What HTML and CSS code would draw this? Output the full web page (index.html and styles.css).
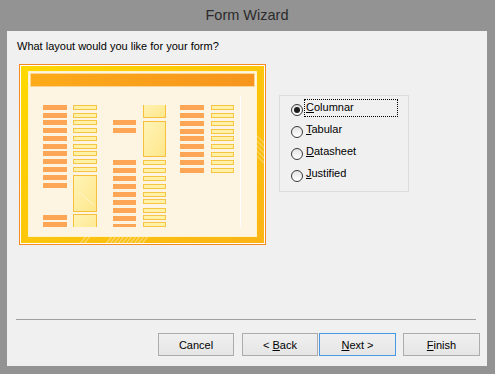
FILE: index.html
```html
<!DOCTYPE html>
<html>
<head>
<meta charset="utf-8">
<link rel="stylesheet" href="styles.css">
</head>
<body>
<div class="window">
  <div class="titlebar">Form Wizard</div>
  <div class="panel">
    <p class="question">What layout would you like for your form?</p>
    <div class="main">
      <svg class="preview" width="247" height="181" viewBox="0 0 247 181">
        <defs>
          <linearGradient id="frame" x1="0" y1="0" x2="1" y2="1">
            <stop offset="0" stop-color="#ffd900"/>
            <stop offset="1" stop-color="#fbb416"/>
          </linearGradient>
          <linearGradient id="hdr" x1="0" y1="0" x2="1" y2="0">
            <stop offset="0" stop-color="#fcab19"/>
            <stop offset="1" stop-color="#f7951e"/>
          </linearGradient>
          <linearGradient id="box" x1="0" y1="0" x2="1" y2="1">
            <stop offset="0" stop-color="#fff4b8"/>
            <stop offset="1" stop-color="#fee68a"/>
          </linearGradient>
          <clipPath id="clip"><rect x="10" y="41" width="227" height="122"/></clipPath>
          <clipPath id="bandb"><rect x="2" y="172" width="243" height="7"/></clipPath>
          <clipPath id="bandr"><rect x="237" y="8" width="8" height="164"/></clipPath>
          <g id="f24"><rect width="24" height="5" fill="#f8c445"/><rect x="1" y="1" width="22" height="3" fill="#fff2a6"/></g>
          <g id="f23"><rect width="23" height="5" fill="#f8c445"/><rect x="1" y="1" width="21" height="3" fill="#fff2a6"/></g>
          <rect id="o24" width="24" height="5" fill="#fda655"/>
          <rect id="o23" width="23" height="5" fill="#fda655"/>
        </defs>
        <rect x="0.5" y="0.5" width="246" height="180" fill="#fff" stroke="#f68a1e"/>
        <rect x="2" y="2" width="243" height="177" fill="url(#frame)"/>
        <g clip-path="url(#bandb)" stroke="#fff" stroke-opacity="0.35" stroke-width="1.5">
          <line x1="86" y1="181" x2="94" y2="171"/><line x1="90" y1="181" x2="98" y2="171"/>
          <line x1="94" y1="181" x2="102" y2="171"/><line x1="98" y1="181" x2="106" y2="171"/>
          <line x1="102" y1="181" x2="110" y2="171"/><line x1="106" y1="181" x2="114" y2="171"/>
          <line x1="110" y1="181" x2="118" y2="171"/><line x1="114" y1="181" x2="122" y2="171"/>
          <line x1="118" y1="181" x2="126" y2="171"/><line x1="122" y1="181" x2="130" y2="171"/>
          <line x1="60" y1="181" x2="68" y2="171"/><line x1="64" y1="181" x2="72" y2="171"/>
        </g>
        <g clip-path="url(#bandr)" stroke="#fff" stroke-opacity="0.3" stroke-width="1.5">
          <line x1="236" y1="70" x2="246" y2="80"/><line x1="236" y1="75" x2="246" y2="85"/>
          <line x1="236" y1="80" x2="246" y2="90"/><line x1="236" y1="85" x2="246" y2="95"/>
          <line x1="236" y1="90" x2="246" y2="100"/>
        </g>
        <rect x="9.5" y="7.5" width="228" height="165" fill="#fdf4e1" stroke="#fff3cc"/>
        <rect x="11.5" y="9.5" width="224" height="13" fill="url(#hdr)" stroke="#fcd597"/>
        <rect x="221" y="32" width="1" height="131" fill="#ffffff"/>
        <g clip-path="url(#clip)">
          <use href="#o24" x="24" y="41"/><use href="#o24" x="24" y="49"/><use href="#o24" x="24" y="56"/>
          <use href="#o24" x="24" y="64"/><use href="#o24" x="24" y="72"/><use href="#o24" x="24" y="80"/>
          <use href="#o24" x="24" y="87"/><use href="#o24" x="24" y="95"/><use href="#o24" x="24" y="103"/>
          <use href="#o24" x="24" y="111"/><use href="#o24" x="24" y="119"/><use href="#o24" x="24" y="151"/>
          <use href="#o24" x="24" y="158"/>

          <use href="#f24" x="54" y="41"/><use href="#f24" x="54" y="49"/><use href="#f24" x="54" y="56"/>
          <use href="#f24" x="54" y="64"/><use href="#f24" x="54" y="72"/><use href="#f24" x="54" y="80"/>
          <use href="#f24" x="54" y="87"/><use href="#f24" x="54" y="95"/><use href="#f24" x="54" y="103"/>
          <rect x="54.5" y="111.5" width="23" height="36" fill="url(#box)" stroke="#f6bf3e"/>
          <line x1="60" y1="128" x2="76" y2="142" stroke="#fff" stroke-opacity="0.45"/>
          <rect x="54.5" y="150.5" width="23" height="20" fill="url(#box)" stroke="#f6bf3e"/>

          <use href="#o23" x="94" y="56"/><use href="#o23" x="94" y="64"/>
          <use href="#o23" x="94" y="96"/><use href="#o23" x="94" y="104"/><use href="#o23" x="94" y="112"/>
          <use href="#o23" x="94" y="120"/><use href="#o23" x="94" y="128"/><use href="#o23" x="94" y="136"/>
          <use href="#o23" x="94" y="144"/><use href="#o23" x="94" y="152"/><use href="#o23" x="94" y="160"/>

          <rect x="124.5" y="36.5" width="22" height="17" fill="url(#box)" stroke="#f6bf3e"/>
          <rect x="124.5" y="57.5" width="22" height="35" fill="url(#box)" stroke="#f6bf3e"/>
          <use href="#f23" x="124" y="96"/><use href="#f23" x="124" y="104"/><use href="#f23" x="124" y="112"/>
          <use href="#f23" x="124" y="120"/><use href="#f23" x="124" y="128"/><use href="#f23" x="124" y="135"/>
          <use href="#f23" x="124" y="144"/><use href="#f23" x="124" y="151"/><use href="#f23" x="124" y="158"/>

          <use href="#o24" x="161" y="41"/><use href="#o24" x="161" y="49"/><use href="#o24" x="161" y="57"/>
          <use href="#o24" x="161" y="65"/><use href="#o24" x="161" y="72"/><use href="#o24" x="161" y="80"/>
          <use href="#o24" x="161" y="88"/><use href="#o24" x="161" y="96"/><use href="#o24" x="161" y="104"/>

          <use href="#f23" x="192" y="41"/><use href="#f23" x="192" y="49"/><use href="#f23" x="192" y="57"/>
          <use href="#f23" x="192" y="65"/><use href="#f23" x="192" y="72"/><use href="#f23" x="192" y="80"/>
          <use href="#f23" x="192" y="88"/><use href="#f23" x="192" y="96"/><use href="#f23" x="192" y="104"/>
        </g>
      </svg>
      <div class="group">
        <label class="option"><span class="radio checked"></span><span class="label focus"><u>C</u>olumnar</span></label>
        <label class="option"><span class="radio"></span><span class="label"><u>T</u>abular</span></label>
        <label class="option"><span class="radio"></span><span class="label"><u>D</u>atasheet</span></label>
        <label class="option"><span class="radio"></span><span class="label"><u>J</u>ustified</span></label>
      </div>
    </div>
    <div class="separator"></div>
    <div class="buttons">
      <button class="btn btn-cancel">Cancel</button>
      <button class="btn btn-back">&lt; <u>B</u>ack</button>
      <button class="btn btn-next btn-default"><u>N</u>ext &gt;</button>
      <button class="btn btn-finish"><u>F</u>inish</button>
    </div>
  </div>
</div>
</body>
</html>
```

FILE: styles.css
```css
* {
  box-sizing: border-box;
}

body {
  margin: 0;
  font-family: "Liberation Sans", Arial, sans-serif;
}

.window {
  width: 495px;
  height: 374px;
  background: #939393;
  display: flex;
  flex-direction: column;
  padding: 0 8px 8px 7px;
}

.titlebar {
  height: 31px;
  line-height: 31px;
  text-align: center;
  font-size: 14.5px;
  color: #2b2b2b;
  flex: none;
}

.panel {
  flex: 1;
  background: #f0f0f0;
  padding: 8px 0 0 9px;
  font-size: 11px;
  color: #000;
  display: flex;
  flex-direction: column;
}

.question {
  margin: 0 0 0 1px;
  line-height: 15px;
}

.main {
  display: flex;
  align-items: flex-start;
  margin-top: 10px;
  height: 181px;
}

.preview {
  display: block;
  flex: none;
  margin-left: 3px;
}

.group {
  margin-left: 13px;
  margin-top: 31px;
  width: 130px;
  height: 97px;
  border: 1px solid #dcdcdc;
  padding: 2px 0 0 11px;
  flex: none;
}

.option {
  display: flex;
  align-items: flex-start;
  height: 22px;
}

.radio {
  position: relative;
  flex: none;
  width: 12px;
  height: 12px;
  margin-top: 6px;
  border-radius: 50%;
  border: 1px solid #3a3a3a;
  background: linear-gradient(#e4e4e4, #ffffff);
}

.radio.checked::after {
  content: "";
  position: absolute;
  left: 2px;
  top: 2px;
  width: 6px;
  height: 6px;
  border-radius: 50%;
  background: #1c1c1c;
}

.label {
  margin-left: 1px;
  margin-top: 1px;
  height: 18px;
  line-height: 14px;
  padding: 0 1px;
  border: 1px dotted transparent;
  white-space: nowrap;
}

.label.focus {
  width: 94px;
  border-color: #000;
}

.separator {
  margin-top: 74px;
  width: 460px;
  height: 0;
  border-top: 1px solid #a0a0a0;
}

.buttons {
  display: flex;
  justify-content: flex-end;
  margin-top: 13px;
  padding-right: 7px;
}

.btn {
  height: 23px;
  width: 76px;
  padding: 0;
  border: 1px solid #acacac;
  background: linear-gradient(#f0f0f0, #e5e5e5);
  font-family: "Liberation Sans", Arial, sans-serif;
  font-size: 11px;
  color: #000;
}

.btn-back {
  margin-left: 8px;
}

.btn-next {
  margin-left: 1px;
  width: 77px;
}

.btn-finish {
  margin-left: 7px;
  width: 77px;
}

.btn-default {
  border-color: #4a98e4;
}
```
